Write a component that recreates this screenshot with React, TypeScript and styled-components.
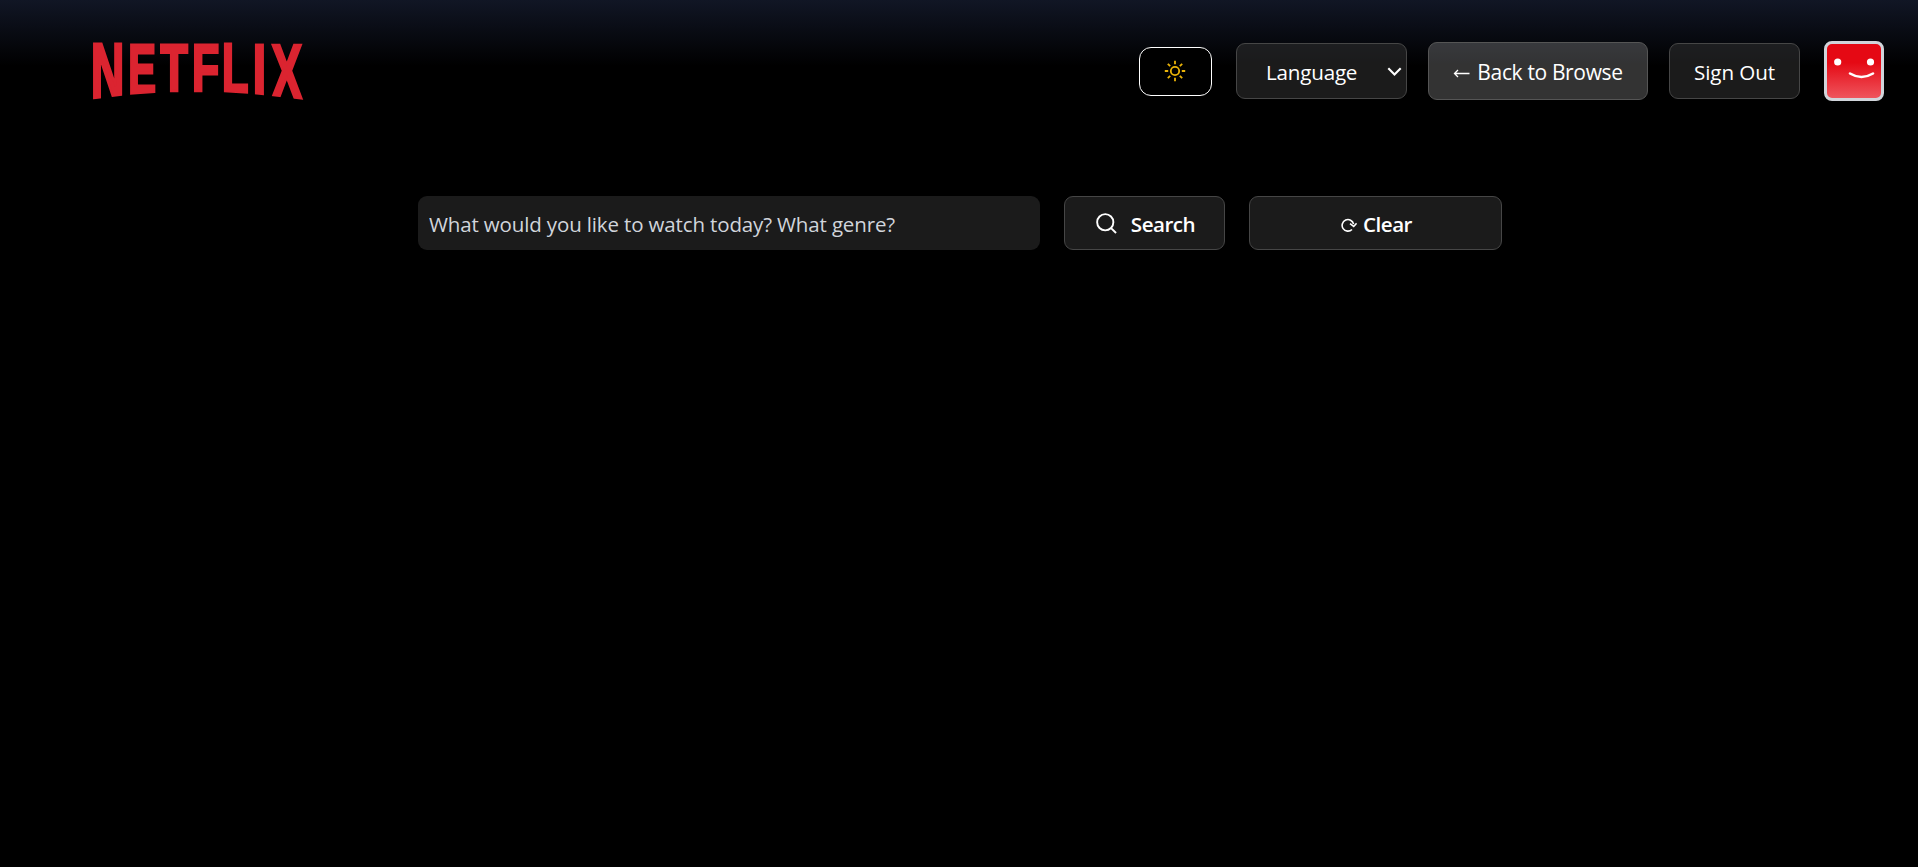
import React from "react";
import styled, { createGlobalStyle, css } from "styled-components";

const GlobalStyle = createGlobalStyle`
  * { box-sizing: border-box; }
  body {
    margin: 0;
    background: #000;
    font-family: "Open Sans", "Noto Sans", sans-serif;
    overflow: hidden;
  }
`;

const Page = styled.div`
  min-height: 100vh;
  background: #000;
`;

const Header = styled.header`
  display: flex;
  align-items: center;
  justify-content: space-between;
  height: 142px;
  padding: 0 34px 0 93px;
  background: linear-gradient(to bottom, #111625 0, #000 66px);
`;

const Wordmark = styled.svg`
  display: block;
  width: 212px;
  height: 58px;
  overflow: visible;
  fill: #db2430;
  stroke: #db2430;
  font: 700 80px "Liberation Sans", Arial, sans-serif;
`;

const Actions = styled.nav`
  display: flex;
  align-items: center;
`;

const buttonBase = css`
  display: flex;
  align-items: center;
  justify-content: center;
  border: 1px solid #464646;
  border-radius: 9px;
  background: rgba(51, 51, 51, 0.53);
  color: #fff;
  font-family: inherit;
  font-size: 20.6px;
  white-space: nowrap;
  padding: 0;
`;

const ThemeButton = styled.button`
  ${buttonBase}
  width: 73px;
  height: 49px;
  margin-right: 24px;
  padding-right: 1px;
  border-color: #fff;
  border-radius: 12px;
  background: #000;
`;

const Label = styled.span<{ $spacing: number }>`
  letter-spacing: ${(p) => p.$spacing}px;
`;

const LanguageButton = styled.button`
  ${buttonBase}
  justify-content: space-between;
  width: 171px;
  height: 56px;
  padding: 2px 4px 0 29px;
  margin-right: 21px;
`;

const BackButton = styled.button`
  ${buttonBase}
  width: 220px;
  height: 58px;
  gap: 7px;
  padding-top: 2px;
  margin-right: 21px;
  border-color: #555;
  background: rgba(255, 255, 255, 0.2);
  font-size: 21px;
`;

const SignOutButton = styled.button`
  ${buttonBase}
  width: 131px;
  height: 56px;
  padding-top: 2px;
  margin-right: 24px;
`;

const Avatar = styled.svg`
  display: block;
  width: 60px;
  height: 60px;
`;

const SearchForm = styled.form`
  display: flex;
  gap: 24px;
  padding: 54px 0 0 418px;
`;

const Field = styled.input`
  width: 622px;
  height: 54px;
  border: 0;
  border-radius: 9px;
  padding: 2px 12px 0 11px;
  background: #1b1b1b;
  color: #d1d5db;
  font-family: inherit;
  font-size: 20.5px;
  letter-spacing: -0.14px;
  &::placeholder { color: #d1d5db; opacity: 1; }
`;

const FormButton = styled.button<{ $width: number; $gap: number }>`
  ${buttonBase}
  width: ${(p) => p.$width}px;
  height: 54px;
  gap: ${(p) => p.$gap}px;
  padding: 2px 0 0 2px;
  font-weight: 600;
  background: #1b1b1b;
`;

const SearchIcon = styled.svg`
  margin-bottom: 2px;
`;

type Letter = { char: string; x: number; width: number; height: number; min: number; max: number };

const letters: Letter[] = [
  { char: "N", x: 0, width: 29, height: 57, min: 137, max: 1336 },
  { char: "E", x: 37, width: 25, height: 52, min: 137, max: 1275 },
  { char: "T", x: 67.5, width: 27.5, height: 49.3, min: 42, max: 1208 },
  { char: "F", x: 101, width: 24.5, height: 49, min: 137, max: 1170 },
  { char: "L", x: 131, width: 24, height: 51.2, min: 137, max: 1180 },
  { char: "I", x: 162, width: 9, height: 52.5, min: 137, max: 432 },
  { char: "X", x: 178, width: 31.5, height: 57, min: 28, max: 1338 },
];

function Logo() {
  const em = 80 / 2048;
  return (
    <Wordmark viewBox="0 -1 212 58" role="img" aria-label="Netflix">
      {letters.map((l) => {
        const stroke = l.char === "I" ? 0 : l.char === "X" ? 3 : 3.6;
        const sx = l.width / ((l.max - l.min) * em + stroke);
        const sy = l.height / (1409 * em + stroke);
        const tx = l.x - (l.min * em - stroke / 2) * sx;
        const ty = l.height - (stroke / 2) * sy + 0.2;
        return (
          <text key={l.char} strokeWidth={stroke} transform={`translate(${tx} ${ty}) scale(${sx} ${sy})`}>
            {l.char}
          </text>
        );
      })}
      <path
        d="M-1 56.5L37 51.7L62 50L77 49.5H125L131 49.3L155 50.7L178 53L212 57V60H-1Z"
        fill="#000"
        stroke="none"
      />
    </Wordmark>
  );
}

function SunIcon() {
  return (
    <svg width="22" height="22" viewBox="0 0 22 22" fill="none" stroke="#eab308" strokeWidth="1.8">
      <circle cx="11" cy="11" r="4.2" />
      <path d="M11 .8v3.4M11 17.8v3.4M.8 11h3.4M17.8 11h3.4M3.8 3.8l2.4 2.4M15.8 15.8l2.4 2.4M18.2 3.8l-2.4 2.4M6.2 15.8l-2.4 2.4" />
    </svg>
  );
}

export default function App() {
  return (
    <Page>
      <GlobalStyle />
      <Header>
        <Logo />
        <Actions>
          <ThemeButton aria-label="Toggle theme"><SunIcon /></ThemeButton>
          <LanguageButton>
            <Label $spacing={-0.2}>Language</Label>
            <svg width="15" height="10" viewBox="0 0 15 10" fill="none" stroke="#fff" strokeWidth="2.1">
              <path d="M1.3 1.2L7.5 7.4L13.7 1.2" />
            </svg>
          </LanguageButton>
          <BackButton>
            <svg width="17" height="12" viewBox="0 0 17 12" fill="none" stroke="#fff" strokeWidth="1.3">
              <path d="M16.5 7.5H1.5M5 4L1.5 7.5L5 11" />
            </svg>
            <Label $spacing={-0.35}>Back to Browse</Label>
          </BackButton>
          <SignOutButton><Label $spacing={-0.1}>Sign Out</Label></SignOutButton>
          <Avatar viewBox="0 0 60 60">
            <defs>
              <linearGradient id="face" x1="0" y1="0" x2="0" y2="1">
                <stop offset="0.35" stopColor="#e50914" />
                <stop offset="1" stopColor="#ef5860" />
              </linearGradient>
            </defs>
            <rect x="1.5" y="1.5" width="57" height="57" rx="6.5" fill="url(#face)" stroke="#d1d5db" strokeWidth="3" />
            <circle cx="13.7" cy="21" r="3.6" fill="#fff" />
            <circle cx="46.5" cy="21" r="3.6" fill="#fff" />
            <path d="M26 32.5Q37.5 39.5 49 32.5" fill="none" stroke="#fff" strokeWidth="2.6" strokeLinecap="round" />
          </Avatar>
        </Actions>
      </Header>
      <SearchForm onSubmit={(e) => e.preventDefault()}>
        <Field placeholder="What would you like to watch today? What genre?" />
        <FormButton $width={161} $gap={14}>
          <SearchIcon width="21" height="21" viewBox="0 0 22 22" fill="none" stroke="#fff" strokeWidth="2">
            <circle cx="9.7" cy="9.7" r="8.5" />
            <path d="M15.8 15.8L21 21" />
          </SearchIcon>
          <Label $spacing={-0.5}>Search</Label>
        </FormButton>
        <FormButton $width={253} $gap={6} type="button">
          <svg width="16" height="16" viewBox="0 0 16 16" fill="none" stroke="#fff" strokeWidth="1.6">
            <path d="M11 13.5A5.8 5.8 0 1 1 12.6 8.1M9 7.7L12.7 10.5L15.6 7.3" />
          </svg>
          <Label $spacing={-0.5}>Clear</Label>
        </FormButton>
      </SearchForm>
    </Page>
  );
}
